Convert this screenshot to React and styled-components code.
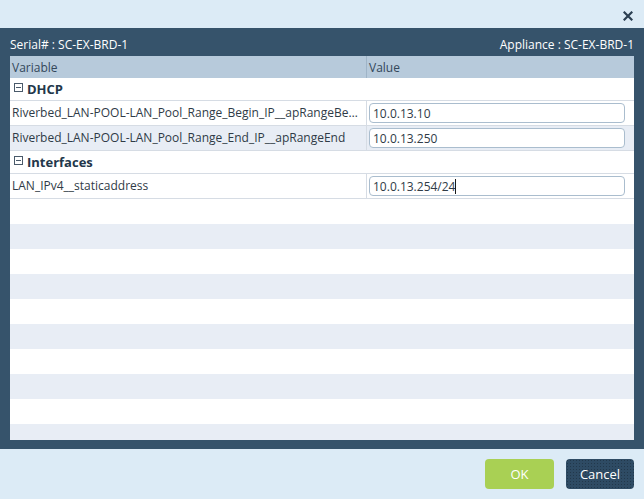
import React from "react";
import styled, { createGlobalStyle } from "styled-components";

const GlobalStyle = createGlobalStyle`
  html, body {
    margin: 0;
    padding: 0;
    background: #dcebf6;
  }
  body {
    font-family: "Open Sans", "Liberation Sans", sans-serif;
  }
`;

const groups = [
  {
    name: "DHCP",
    rows: [
      {
        variable: "Riverbed_LAN-POOL-LAN_Pool_Range_Begin_IP__apRangeBegin",
        value: "10.0.13.10",
      },
      {
        variable: "Riverbed_LAN-POOL-LAN_Pool_Range_End_IP__apRangeEnd",
        value: "10.0.13.250",
      },
    ],
  },
  {
    name: "Interfaces",
    rows: [
      { variable: "LAN_IPv4__staticaddress", value: "10.0.13.254/24", editing: true },
    ],
  },
];

export default function App() {
  return (
    <>
      <GlobalStyle />
      <Dialog>
        <TitleBar>
          <CloseButton aria-label="close">
            <svg width="10" height="10" viewBox="0 0 10 10">
              <path
                d="M1.5 1.5 L8.5 8.5 M8.5 1.5 L1.5 8.5"
                stroke="#2b3f52"
                strokeWidth="2.2"
                strokeLinecap="square"
              />
            </svg>
          </CloseButton>
        </TitleBar>
        <Body>
          <InfoRow>
            <span>Serial# : SC-EX-BRD-1</span>
            <span>Appliance : SC-EX-BRD-1</span>
          </InfoRow>
          <Grid>
            <HeaderRow>
              <HeaderCell>Variable</HeaderCell>
              <HeaderCell>Value</HeaderCell>
            </HeaderRow>
            {groups.map((group) => (
              <React.Fragment key={group.name}>
                <GroupRow>
                  <Toggle />
                  {group.name}
                </GroupRow>
                {group.rows.map((row, i) => (
                  <DataRow key={row.variable} $alt={i % 2 === 1}>
                    <VarCell>{row.variable}</VarCell>
                    <ValueCell>
                      <Field>
                        <ValueInput defaultValue={row.value} />
                        {row.editing && <Caret />}
                      </Field>
                    </ValueCell>
                  </DataRow>
                ))}
              </React.Fragment>
            ))}
            {Array.from({ length: 10 }).map((_, i) => (
              <EmptyRow key={i} $alt={i % 2 === 1} />
            ))}
          </Grid>
        </Body>
        <Footer>
          <Button $kind="ok">OK</Button>
          <Button $kind="cancel">Cancel</Button>
        </Footer>
      </Dialog>
    </>
  );
}

const Dialog = styled.div`
  width: 644px;
  height: 499px;
  display: flex;
  flex-direction: column;
  overflow: hidden;
`;

const TitleBar = styled.div`
  height: 28px;
  flex: none;
  display: flex;
  justify-content: flex-end;
  align-items: center;
  padding: 3px 10px 0 0;
  box-sizing: border-box;
  background-color: #dcebf6;
`;

const CloseButton = styled.div`
  width: 12px;
  height: 12px;
  display: flex;
  align-items: center;
  justify-content: center;
  cursor: pointer;
`;

const Body = styled.div`
  flex: 1;
  display: flex;
  flex-direction: column;
  background-color: #36536b;
  padding: 0 10px 9px 10px;
  min-height: 0;
`;

const InfoRow = styled.div`
  height: 28px;
  flex: none;
  display: flex;
  justify-content: space-between;
  align-items: flex-end;
  padding-bottom: 3px;
  box-sizing: border-box;
  color: #ffffff;
  font-size: 12px;
  line-height: 16px;
`;

const Grid = styled.div`
  flex: 1;
  min-height: 0;
  overflow: hidden;
  background-color: #ffffff;
  font-size: 12px;
  color: #2f3b47;
`;

const HeaderRow = styled.div`
  display: grid;
  grid-template-columns: 357px 1fr;
  height: 22px;
  background-color: #b7cadb;
`;

const HeaderCell = styled.div`
  display: flex;
  align-items: center;
  padding-left: 2px;
  color: #33475a;
  &:first-child {
    border-right: 1px solid #9fb4c7;
  }
`;

const GroupRow = styled.div`
  height: 22px;
  display: flex;
  align-items: center;
  gap: 4px;
  padding-left: 4px;
  border-bottom: 1px solid #d6dce4;
  font-size: 13px;
  font-weight: 700;
  color: #23374a;
`;

const Toggle = styled.span`
  position: relative;
  width: 7px;
  height: 7px;
  border: 1px solid #4a5a6a;
  box-sizing: content-box;
  margin-bottom: 3px;
  &::after {
    content: "";
    position: absolute;
    left: 1px;
    right: 1px;
    top: 3px;
    height: 1px;
    background: #4a5a6a;
  }
`;

const DataRow = styled.div`
  display: grid;
  grid-template-columns: 357px 1fr;
  height: 24px;
  border-bottom: 1px solid #d6dce4;
  background-color: ${(p) => (p.$alt ? "#e8edf5" : "#ffffff")};
`;

const VarCell = styled.div`
  display: block;
  padding: 0 5px 0 2px;
  border-right: 1px solid #d6dce4;
  overflow: hidden;
  white-space: nowrap;
  text-overflow: ellipsis;
  line-height: 24px;
`;

const ValueCell = styled.div`
  display: flex;
  align-items: center;
  padding: 0 9px 0 2px;
`;

const Field = styled.div`
  position: relative;
  flex: 1;
  display: flex;
`;

const ValueInput = styled.input`
  width: 100%;
  height: 20px;
  box-sizing: border-box;
  border: 1px solid #aabdce;
  border-radius: 4px;
  padding: 0 3px;
  font-family: "Open Sans", "Liberation Sans", sans-serif;
  font-size: 12px;
  color: #2f3b47;
  background: #ffffff;
  outline: none;
`;

const Caret = styled.span`
  position: absolute;
  left: 86px;
  top: 3px;
  width: 1px;
  height: 15px;
  background: #1a1a1a;
`;

const EmptyRow = styled.div`
  height: 25px;
  background-color: ${(p) => (p.$alt ? "#e8edf5" : "#ffffff")};
`;

const Footer = styled.div`
  height: 50px;
  flex: none;
  display: flex;
  justify-content: flex-end;
  align-items: center;
  gap: 12px;
  padding-right: 10px;
  background-color: #dcebf6;
`;

const Button = styled.button`
  width: ${(p) => (p.$kind === "ok" ? "69px" : "68px")};
  height: 30px;
  border: none;
  border-radius: 4px;
  color: #ffffff;
  font-family: "Open Sans", "Liberation Sans", sans-serif;
  font-size: 13px;
  cursor: pointer;
  background-color: ${(p) => (p.$kind === "ok" ? "#a9d054" : "#2e4b64")};
  background-image: ${(p) =>
    p.$kind === "ok"
      ? "none"
      : "radial-gradient(rgba(0,0,0,0.25) 0.6px, transparent 0.8px)"};
  background-size: 3px 3px;
`;
